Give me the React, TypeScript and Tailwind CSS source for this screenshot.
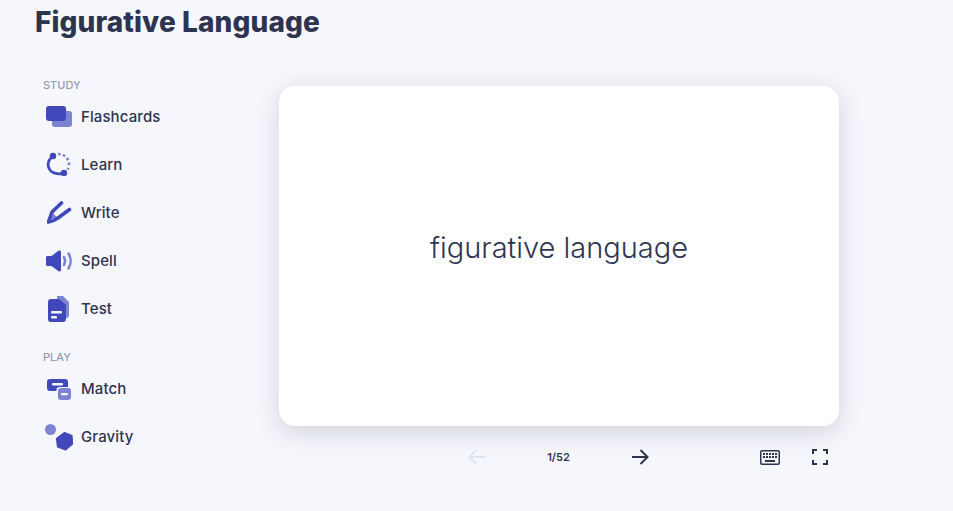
const Flashcards = () => (
  <svg width="26" height="22" viewBox="0 0 26 22">
    <rect x="6" y="5" width="20" height="16" rx="3" fill="#7b84d1" />
    <rect x="0" y="0" width="20" height="15" rx="3" fill="#4149ba" />
  </svg>
)

const Learn = () => (
  <svg width="26" height="26" viewBox="0 0 26 26" fill="none">
    <path d="M6 5C3 7.500 1.500 11 2.500 15C3.800 20 9 22.800 16 21.500" stroke="#4149ba" strokeWidth="2.800" strokeLinecap="round" />
    <circle cx="7" cy="4" r="3.200" fill="#4149ba" />
    <circle cx="18" cy="21" r="3.200" fill="#4149ba" />
    <path d="M12 2C18 1.500 23.500 7 23 13C22.800 15 22.300 16.500 21.500 17.500" stroke="#7b84d1" strokeWidth="2.600" strokeDasharray="2.600 2.400" />
  </svg>
)

const Write = () => (
  <svg width="26" height="26" viewBox="0 0 26 26" fill="none" className="ml-[1px]">
    <path d="M5 12.500L10 17L2 22Z" fill="#7b84d1" />
    <path d="M1.500 22L5 12L14.500 3M1.500 22C5 21.500 8 20 11 18L22.500 9.500" stroke="#4149ba" strokeWidth="3.600" strokeLinecap="round" strokeLinejoin="round" />
    <path d="M5.500 14.500L8.500 17.500L4 20.500Z" fill="#7b84d1" />
  </svg>
)

const Spell = () => (
  <svg width="26" height="22" viewBox="0 0 26 22" fill="none">
    <path d="M1.500 6H5.500L12.500 .8C13.500 .2 15 .8 15 2V20C15 21.200 13.500 21.800 12.500 21.200L5.500 16H1.500C.7 16 0 15.300 0 14.500V7.500C0 6.700 .7 6 1.500 6Z" fill="#4149ba" />
    <path d="M18 7C19.300 9.500 19.300 12.500 18 15" stroke="#7b84d1" strokeWidth="2.600" strokeLinecap="round" />
    <path d="M22.500 3.500C25.300 8 25.300 14 22.500 18.500" stroke="#7b84d1" strokeWidth="2.600" strokeLinecap="round" />
  </svg>
)

const Test = () => (
  <svg width="22" height="26" viewBox="0 0 22 26" className="ml-[2px]">
    <path d="M9 0H15L21 6V19C21 21 20 22 18 22H9Z" fill="#7b84d1" />
    <path d="M3 3H11L18 9V23C18 25 17 26 15 26H3C1 26 0 25 0 23V6C0 4 1 3 3 3Z" fill="#4149ba" />
    <rect x="3" y="15" width="11" height="2.400" rx="1" fill="#f6f7fc" />
    <rect x="3" y="20" width="6" height="2.400" rx="1" fill="#f6f7fc" />
  </svg>
)

const Match = () => (
  <svg width="25" height="21" viewBox="0 0 25 21" className="ml-[1px]">
    <rect x="0" y="0" width="21" height="12" rx="3" fill="#4149ba" />
    <rect x="5" y="4" width="11" height="2.500" rx="1" fill="#f6f7fc" />
    <rect x="9.500" y="8" width="15.500" height="13" rx="3" fill="#f6f7fc" />
    <rect x="11" y="9" width="13" height="12" rx="3" fill="#7b84d1" />
    <rect x="14" y="14" width="7" height="2.200" rx="1" fill="#f6f7fc" />
  </svg>
)

const Gravity = () => (
  <svg width="29" height="27" viewBox="0 0 29 27" className="-ml-[1px]">
    <circle cx="5.500" cy="5.500" r="5.500" fill="#7b84d1" />
    <path d="M19.500 8.500L27 11.500L27.500 20L20.500 26L12.500 23L11.500 14.500Z" fill="#4149ba" stroke="#4149ba" strokeWidth="1.200" strokeLinejoin="round" />
  </svg>
)

const Arrow = ({ color, flip }: { color: string; flip?: boolean }) => (
  <svg width="18" height="16" viewBox="0 0 18 16" fill="none" className={flip ? "rotate-180" : ""}>
    <path d="M1 8H16.500M9.500 1L16.500 8L9.500 15" stroke={color} strokeWidth="2" />
  </svg>
)

const Keyboard = () => (
  <svg width="20" height="15" viewBox="0 0 20 15">
    <rect x="0" y="0" width="20" height="15" rx="2" fill="#2e3450" />
    <rect x="1.500" y="1.500" width="17" height="12" rx=".8" fill="#f6f7fc" />
    <path d="M3 3h2v2H3zM6 3h2v2H6zM9 3h2v2H9zM12 3h2v2h-2zM15 3h2v2h-2zM3 6h2v2H3zM6 6h2v2H6zM9 6h2v2H9zM12 6h2v2h-2zM15 6h2v2h-2zM5 10h10v2H5z" fill="#2e3450" />
  </svg>
)

const Fullscreen = () => (
  <svg width="16" height="16" viewBox="0 0 16 16" fill="none">
    <path d="M1 5V1H5M11 1H15V5M15 11V15H11M5 15H1V11" stroke="#2e3450" strokeWidth="2" />
  </svg>
)

const study = [
  { name: "Flashcards", icon: <Flashcards /> },
  { name: "Learn", icon: <Learn /> },
  { name: "Write", icon: <Write /> },
  { name: "Spell", icon: <Spell /> },
  { name: "Test", icon: <Test /> },
]

const play = [
  { name: "Match", icon: <Match /> },
  { name: "Gravity", icon: <Gravity /> },
]

const Item = ({ name, icon }: { name: string; icon: React.ReactNode }) => (
  <div className="flex items-center h-12">
    <div className="w-[38px] pl-[3px] flex justify-start">{icon}</div>
    <span className="text-[15px] font-[550] text-[#2e3450] tracking-[0.1px]">{name}</span>
  </div>
)

export default function App() {
  return (
    <div className="h-[511px] w-[953px] overflow-hidden bg-[#f6f7fc] font-['Inter',sans-serif] text-[#2e3450]">
      <h1 className="pl-[35px] pt-[4px] text-[28px] leading-[36px] font-extrabold tracking-[0.1px]">Figurative Language</h1>
      <div className="flex pt-[37px]">
        <div className="w-[279px] pl-[43px] shrink-0">
          <div className="text-[11px] leading-4 font-medium text-[#939bb4] uppercase">Study</div>
          <div>
            {study.map((s) => <Item key={s.name} name={s.name} icon={s.icon} />)}
          </div>
          <div className="mt-[16px] text-[11px] leading-4 font-medium text-[#939bb4] uppercase">Play</div>
          <div>
            {play.map((s) => <Item key={s.name} name={s.name} icon={s.icon} />)}
          </div>
        </div>
        <div className="flex flex-col">
          <div className="w-[560px] h-[340px] bg-white rounded-[16px] shadow-[0_6px_24px_rgba(46,52,80,0.18)] flex items-center justify-center mt-[9px]">
            <span className="text-[29px] font-light pb-[16px]">figurative language</span>
          </div>
          <div className="flex items-center h-[32px] mt-[15px] pl-[189px]">
            <Arrow color="#dfe2ef" flip />
            <span className="w-[145px] text-center text-[11px] font-semibold">1/52</span>
            <Arrow color="#2e3450" />
            <div className="ml-[111px]"><Keyboard /></div>
            <div className="ml-[32px]"><Fullscreen /></div>
          </div>
        </div>
      </div>
    </div>
  )
}
